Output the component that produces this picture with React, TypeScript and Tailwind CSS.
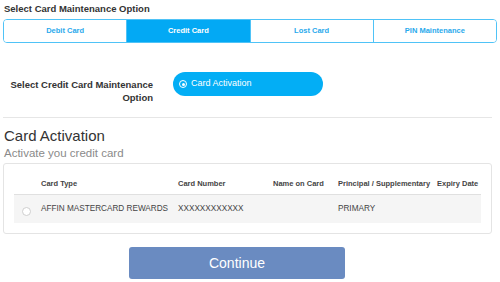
import React, { useState } from 'react';

const tabs = ['Debit Card', 'Credit Card', 'Lost Card', 'PIN Maintenance'];

export default function App() {
  const [active, setActive] = useState('Credit Card');

  return (
    <div className="w-[500px] h-[282px] bg-white overflow-hidden font-['Liberation_Sans',Arial,sans-serif] text-[#333]">
      <div className="px-[4px] pt-[2px] text-[9.5px] font-bold leading-[13px]">Select Card Maintenance Option</div>

      {/* Tabs */}
      <div className="mx-[3px] mt-[4px] flex h-[24px] rounded-[4px] border border-[#4fc3f7] overflow-hidden">
        {tabs.map((t, i) => (
          <button
            key={t}
            onClick={() => setActive(t)}
            className={`flex-1 text-[7.5px] font-bold ${i > 0 ? 'border-l border-[#4fc3f7]' : ''} ${
              active === t ? 'bg-[#03a9f4] text-white' : 'bg-white text-[#29a9ec]'
            }`}
          >
            {t}
          </button>
        ))}
      </div>

      {/* Option selector */}
      <div className="flex items-start mt-[29px]">
        <div className="w-[153px] text-right text-[9.5px] font-bold leading-[13px] pt-[6px]">
          Select Credit Card Maintenance
          <br />
          Option
        </div>
        <button className="ml-[20px] w-[150px] h-[24px] rounded-full bg-[#03aef5] text-white text-[9px] flex items-center pl-[6px] gap-[4px]">
          <span className="w-[8px] h-[8px] rounded-full border-[1.5px] border-white flex items-center justify-center">
            <span className="w-[3px] h-[3px] rounded-full bg-white" />
          </span>
          Card Activation
        </button>
      </div>

      <div className="mx-[3px] mt-[13px] w-[489px] h-[1px] bg-[#e6e6e6]" />

      <div className="px-[4px] mt-[9px] text-[15px] leading-[18px] text-[#333]">Card Activation</div>
      <div className="px-[4px] mt-[1px] text-[11.5px] leading-[14px] text-[#8a8a8a]">Activate you credit card</div>

      {/* Table */}
      <div className="mx-[3px] mt-[3px] w-[489px] h-[71px] border border-[#e4e4e4] rounded-[3px] px-[10px] pt-[9px]">
        <div className="flex h-[22px] items-center border-b-[1.5px] border-[#e0e0e0] text-[7.5px] font-bold text-[#444]">
          <div className="w-[27px]" />
          <div className="w-[137px]">Card Type</div>
          <div className="w-[95px]">Card Number</div>
          <div className="w-[65px]">Name on Card</div>
          <div className="w-[99px]">Principal / Supplementary</div>
          <div>Expiry Date</div>
        </div>
        <div className="flex h-[28px] items-center bg-[#f5f5f5] text-[8.2px] text-[#444]">
          <div className="w-[27px] flex justify-center pr-[2px]">
            <span className="w-[9px] h-[9px] rounded-full border border-[#cfcfcf] bg-white mt-[4px]" />
          </div>
          <div className="w-[137px]">AFFIN MASTERCARD REWARDS</div>
          <div className="w-[95px]">XXXXXXXXXXXX</div>
          <div className="w-[65px]" />
          <div className="w-[99px]">PRIMARY</div>
          <div />
        </div>
      </div>

      <div className="flex mt-[13px] pl-[129px]">
        <button className="w-[216px] h-[32px] rounded-[3px] bg-[#6a8bc1] text-white text-[14px]">Continue</button>
      </div>
    </div>
  );
}
